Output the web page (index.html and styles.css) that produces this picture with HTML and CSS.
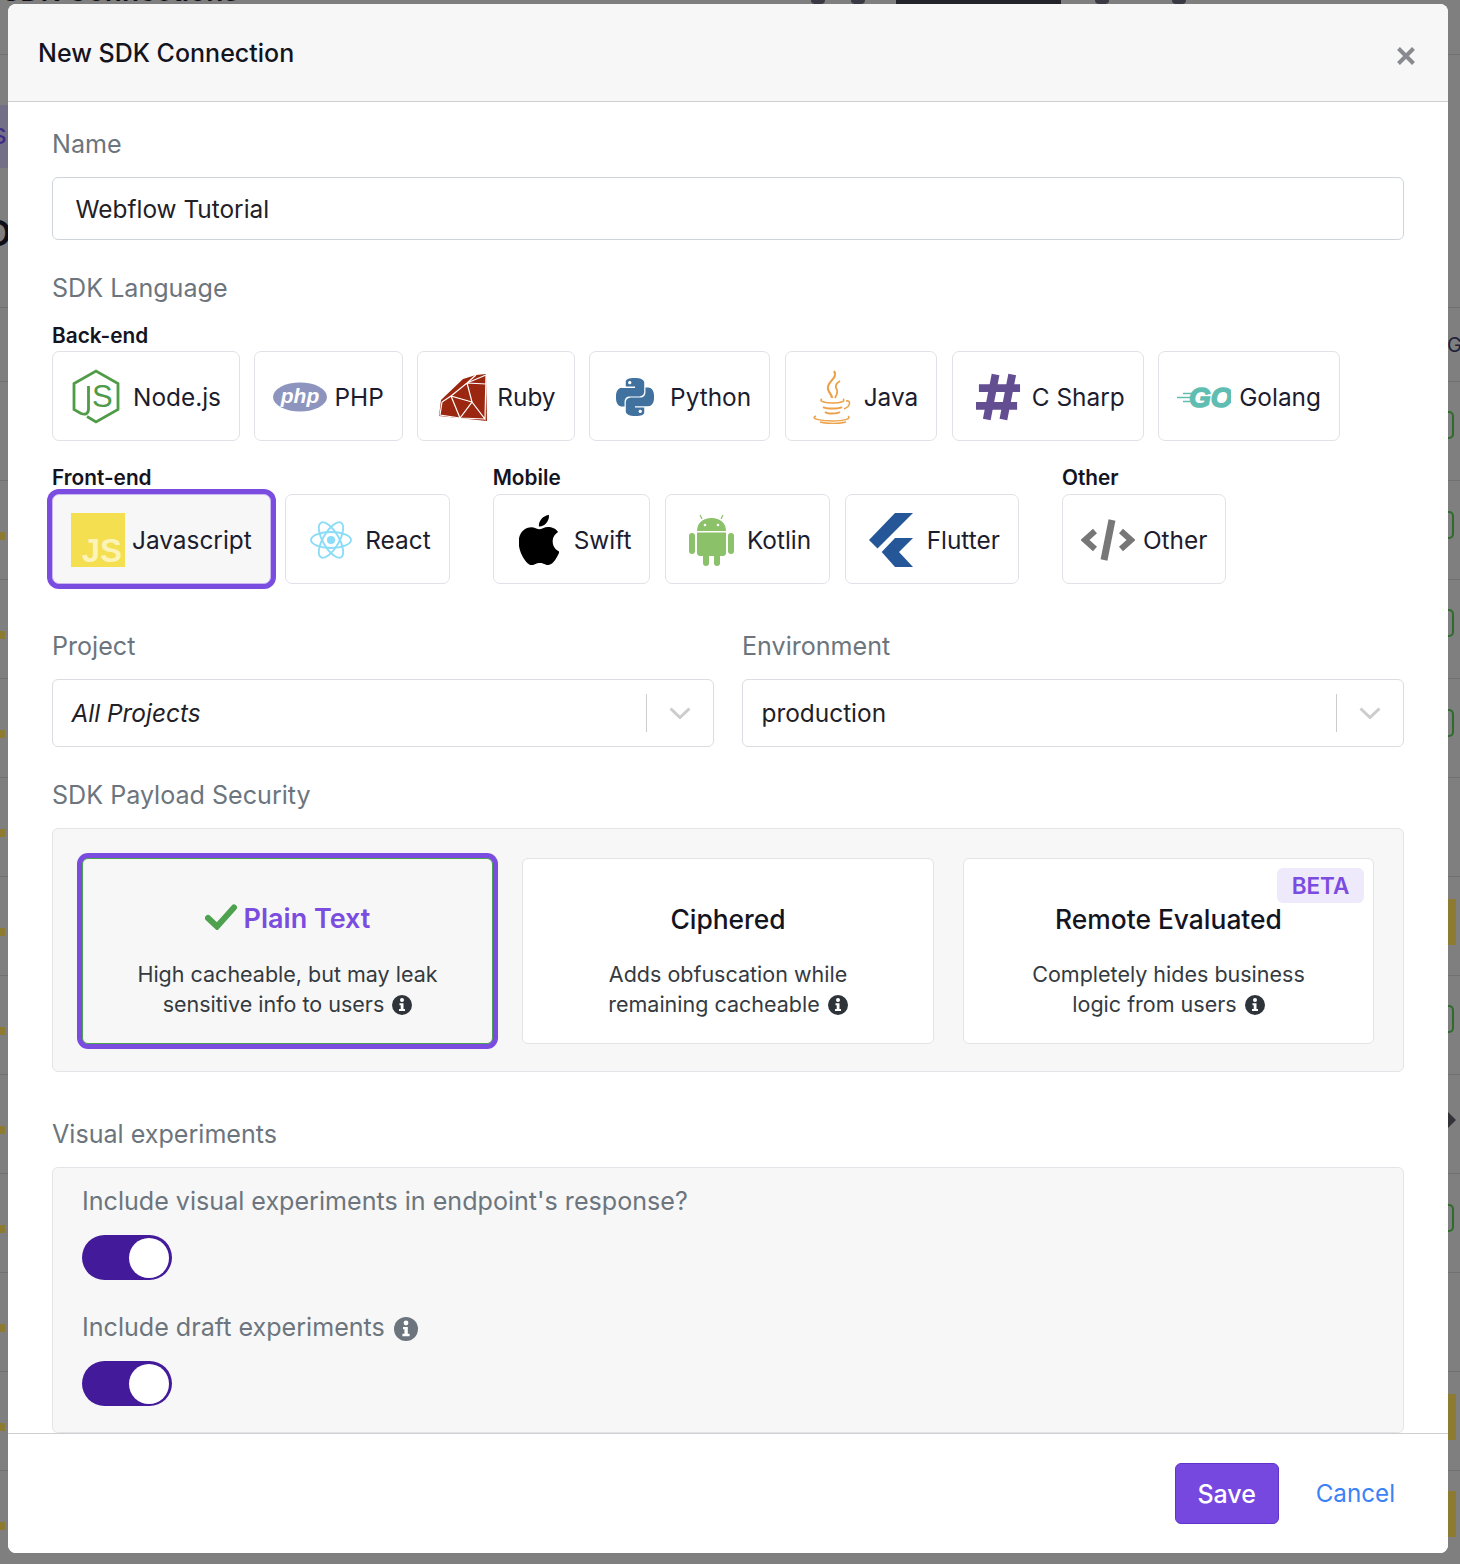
FILE: index.html
```html
<!DOCTYPE html>
<html>
	<head>
		<meta charset="UTF-8">
		<title>New SDK Connection</title>
		<link rel="stylesheet" href="styles.css">
	</head>
	<body>

		<!--page behind the modal-->
		<div class="backdrop">
			<span class="bg-rows"></span>
			<span class="bg-warn"></span>
			<span class="bg-line l1"></span>
			<span class="bg-line l2"></span>
			<span class="bg-title">SDK Connections</span>
			<span class="bg-block"></span>
			<span class="bg-dot d1"></span>
			<span class="bg-dot d2"></span>
			<span class="bg-dot d3"></span>
			<span class="bg-dot d4"></span>
			<span class="bg-account">Demo Account 1</span>
			<span class="bg-side"></span>
			<span class="bg-s">s</span>
			<span class="bg-o">O</span>
			<span class="bg-g">G</span>
			<span class="bg-bracket b1"></span>
			<span class="bg-bracket b2"></span>
			<span class="bg-bracket b3"></span>
			<span class="bg-bracket b4"></span>
			<span class="bg-bracket b5"></span>
			<span class="bg-bracket b6"></span>
			<span class="bg-arrow"></span>
			<span class="bg-yellow y1"></span>
			<span class="bg-yellow y2"></span>
			<span class="bg-yellow y3"></span>
		</div>

		<div class="modal">
			<div class="modal-header">
				<h4 class="modal-title">New SDK Connection</h4>
				<svg class="close-icon" viewBox="0 0 20 20"><path d="M2.500 2.500L17.500 17.500M17.500 2.500L2.500 17.500"/></svg>
			</div>

			<div class="modal-body">
				<label class="field-label">Name</label>
				<div class="text-input">Webflow Tutorial</div>

				<label class="field-label mt-section">SDK Language</label>
				<div class="sub-label first-sub">Back-end</div>
				<div class="lang-row">
					<div class="lang-btn">
						<svg class="ic ic-node" width="48" height="56" viewBox="0 0 48 56">
							<path d="M15 47.500L24 53L46 40.500V14.500L24 2L2 14.500V40.500L9 44.500C13 46 16.500 45 16.500 40V17" fill="none" stroke="#4f9b47" stroke-width="2.800"/>
							<text x="20" y="38" class="node-s">S</text>
						</svg>
						Node.js
					</div>
					<div class="lang-btn">
						<svg class="ic ic-php" width="54" height="30" viewBox="0 0 54 30">
							<ellipse cx="27" cy="15" rx="27" ry="14.500" fill="#8d95bf"/>
							<text x="27" y="21" class="php-text">php</text>
						</svg>
						PHP
					</div>
					<div class="lang-btn">
						<svg class="ic ic-ruby" width="48" height="47" viewBox="0 0 48 47">
							<path d="M47 0L48 47L0 42L2 26L24 5L37 1Z" fill="#9b2710"/>
							<path d="M47 1L28 9L33 28L46 45L47 1ZM28 9L12 22L33 28L21 44L12 22L3 28L1 41L21 44L46 45M28 9L37 1M28 9L47 10M3 28L12 22" fill="none" stroke="#fff" stroke-width="1.200"/>
						</svg>
						Ruby
					</div>
					<div class="lang-btn">
						<svg class="ic ic-python" width="38" height="38" viewBox="0 0 24 24">
							<path fill="#41719f" d="M14.250.180l.900.200.730.260.590.300.450.320.340.340.250.340.160.330.100.300.040.260.020.200-.010.130V8.500l-.050.630-.130.550-.210.460-.260.380-.300.310-.330.250-.350.190-.350.140-.330.100-.300.070-.260.040-.210.020H8.770l-.690.050-.590.140-.500.220-.410.270-.330.320-.270.350-.200.360-.150.370-.100.350-.070.320-.040.270-.020.210v3.060H3.170l-.210-.030-.280-.070-.320-.120-.350-.180-.360-.260-.360-.360-.350-.460-.320-.590-.280-.730-.210-.880-.140-1.050-.050-1.230.060-1.220.160-1.040.240-.870.320-.710.360-.570.400-.440.420-.330.420-.240.400-.160.360-.100.320-.050.240-.010h.160l.060.010h8.160v-.830H6.180l-.010-2.750-.020-.370.050-.340.110-.310.170-.280.250-.260.310-.230.380-.200.440-.180.510-.150.580-.120.640-.100.710-.060.770-.040.840-.020 1.270.050zm-6.300 1.980l-.230.330-.080.410.080.410.230.340.330.220.410.090.410-.09.330-.22.230-.34.080-.41-.08-.41-.23-.33-.33-.22-.41-.09-.41.090zm13.090 3.950l.280.060.320.120.350.180.360.270.360.350.350.470.320.590.280.730.210.880.140 1.040.050 1.230-.060 1.230-.160 1.040-.240.860-.320.710-.360.570-.400.450-.420.330-.420.240-.400.160-.360.090-.320.050-.240.020-.160-.010h-8.220v.820h5.840l.010 2.760.020.360-.050.340-.110.310-.170.290-.250.250-.310.240-.380.200-.440.170-.510.150-.580.130-.640.090-.710.070-.770.040-.840.010-1.270-.04-1.070-.14-.900-.200-.730-.250-.590-.300-.450-.330-.340-.340-.250-.340-.160-.330-.100-.300-.040-.250-.020-.200.010-.130v-5.340l.050-.640.130-.540.210-.460.260-.380.300-.320.330-.240.350-.200.350-.140.330-.100.300-.060.260-.040.210-.020.130-.010h5.840l.690-.050.590-.140.500-.210.410-.280.330-.320.270-.350.200-.360.150-.360.100-.350.070-.320.040-.280.020-.210V6.070h2.090l.140.010zm-6.470 14.250l-.230.330-.080.410.080.410.230.330.330.230.410.08.410-.08.330-.23.230-.33.080-.41-.08-.41-.23-.33-.33-.23-.41-.08-.41.08z"/>
						</svg>
						Python
					</div>
					<div class="lang-btn">
						<svg class="ic ic-java" width="42" height="54" viewBox="0 0 42 54">
							<g fill="none" stroke="#eca24a">
								<path d="M23 1C28 8 15 12 17 19C18 23 21 25 21 28" stroke-width="2.200"/>
								<path d="M29 11C24 14 24 17 26 20C27 23 25 26 24 28" stroke-width="1.800"/>
								<path d="M11 29C7 31 14 33 22 33C30 33 35 31 32 29M35 31C40 30 40 36 33 39" stroke-width="1.600"/>
								<path d="M12 37C14 39 29 39 31 37M14 42C16 44 26 44 29 42" stroke-width="1.800"/>
								<path d="M5 46C-2 49 12 51 22 51C32 51 41 49 37 46M9 52C16 54 28 54 35 52" stroke-width="1.500"/>
							</g>
						</svg>
						Java
					</div>
					<div class="lang-btn">
						<svg class="ic ic-csharp" width="47" height="50" viewBox="0 0 48 50">
							<path d="M21 2L12 48M38 2L29 48M4 16H46M1 34H43" fill="none" stroke="#644e92" stroke-width="8"/>
						</svg>
						C Sharp
					</div>
					<div class="lang-btn">
						<svg class="ic ic-go" width="54" height="24" viewBox="0 0 54 24">
							<path d="M6 8.500H15M0 12.500H14M6 16.500H13" stroke="#5fbdb2" stroke-width="1.500"/>
							<text x="12" y="22" class="go-text">GO</text>
						</svg>
						Golang
					</div>
				</div>

				<div class="lang-groups">
					<div class="lang-group">
						<div class="sub-label">Front-end</div>
						<div class="lang-row">
							<div class="lang-btn selected">
								<div class="ic js-logo">JS</div>
								Javascript
							</div>
							<div class="lang-btn">
								<svg class="ic ic-react" width="42" height="40" viewBox="0 0 42 40">
									<g fill="none" stroke="#8adcf9" stroke-width="1.800">
										<ellipse cx="21" cy="20" rx="20" ry="8"/>
										<ellipse cx="21" cy="20" rx="20" ry="8" transform="rotate(60 21 20)"/>
										<ellipse cx="21" cy="20" rx="20" ry="8" transform="rotate(120 21 20)"/>
									</g>
									<circle cx="21" cy="20" r="4" fill="#8adcf9"/>
								</svg>
								React
							</div>
						</div>
					</div>
					<div class="lang-group">
						<div class="sub-label">Mobile</div>
						<div class="lang-row">
							<div class="lang-btn">
								<svg class="ic ic-swift" width="40" height="50" viewBox="2.500 0 19 24">
									<path fill="#000" d="M12.152 6.896c-.948 0-2.415-1.078-3.960-1.040-2.040.027-3.910 1.183-4.961 3.014-2.117 3.675-.546 9.103 1.519 12.090 1.013 1.454 2.208 3.090 3.792 3.039 1.520-.065 2.090-.987 3.935-.987 1.831 0 2.350.987 3.960.948 1.637-.026 2.676-1.480 3.676-2.948 1.156-1.688 1.636-3.325 1.662-3.415-.039-.013-3.182-1.221-3.220-4.857-.026-3.040 2.480-4.494 2.597-4.559-1.429-2.090-3.623-2.324-4.390-2.376-2-.156-3.675 1.090-4.610 1.090zM15.530 3.830c.843-1.012 1.400-2.427 1.245-3.830-1.207.052-2.662.805-3.532 1.818-.780.896-1.454 2.338-1.273 3.714 1.338.104 2.715-.688 3.559-1.701"/>
								</svg>
								Swift
							</div>
							<div class="lang-btn">
								<svg class="ic ic-android" width="45" height="52" viewBox="0 0 45 52">
									<g fill="#8bc168">
										<path d="M8 17C8 9 14 4 22.500 4C31 4 37 9 37 17Z"/>
										<path d="M8 18.500H37V39C37 41 35.500 42 34 42H11C9.500 42 8 41 8 39Z"/>
										<rect x="0" y="19" width="6" height="21" rx="3"/>
										<rect x="39" y="19" width="6" height="21" rx="3"/>
										<rect x="14" y="40" width="6" height="12" rx="3"/>
										<rect x="25" y="40" width="6" height="12" rx="3"/>
									</g>
									<path d="M13 5L11 1M32 5L34 1" stroke="#8bc168" stroke-width="1.200"/>
									<circle cx="16" cy="11" r="1.300" fill="#fff"/>
									<circle cx="29" cy="11" r="1.300" fill="#fff"/>
								</svg>
								Kotlin
							</div>
							<div class="lang-btn">
								<svg class="ic ic-flutter" width="44" height="54" viewBox="0 0 44 54">
									<path d="M0 27L26 0H44L8.500 35.500Z" fill="#245698"/>
									<path d="M12.700 39L26 25H44L30 39L44 54H26Z" fill="#245698"/>
								</svg>
								Flutter
							</div>
						</div>
					</div>
					<div class="lang-group">
						<div class="sub-label">Other</div>
						<div class="lang-row">
							<div class="lang-btn">
								<svg class="ic ic-other" width="54" height="42" viewBox="0 0 54 42">
									<path d="M14 12L4 21L14 30M40 12L50 21L40 30" fill="none" stroke="#777" stroke-width="6"/>
									<path d="M31 1L23 41" stroke="#777" stroke-width="7"/>
								</svg>
								Other
							</div>
						</div>
					</div>
				</div>

				<div class="select-row">
					<div>
						<label class="field-label">Project</label>
						<div class="select-box">
							<span class="select-value italic">All Projects</span>
							<span class="select-sep"></span>
							<svg class="chevron" viewBox="0 0 22 12"><path d="M1.500 1.500L11 10.500L20.500 1.500"/></svg>
						</div>
					</div>
					<div>
						<label class="field-label">Environment</label>
						<div class="select-box">
							<span class="select-value">production</span>
							<span class="select-sep"></span>
							<svg class="chevron" viewBox="0 0 22 12"><path d="M1.500 1.500L11 10.500L20.500 1.500"/></svg>
						</div>
					</div>
				</div>

				<label class="field-label mt-section">SDK Payload Security</label>
				<div class="security-box">
					<div class="sec-card selected">
						<div class="sec-title purple">
							<svg class="check" viewBox="0 0 32 26"><path d="M3 14L12 22.500L29 3.500" /></svg>
							Plain Text
						</div>
						<div class="sec-desc">High cacheable, but may leak<br>sensitive info to users
							<svg class="info" viewBox="0 0 20 20"><circle cx="10" cy="10" r="10"/><circle class="info-dot" cx="10" cy="5" r="2"/><path class="info-dot" d="M7.500 8.300H11.500V14H13V16H7V14H8.700V10.300H7.500Z"/></svg>
						</div>
					</div>
					<div class="sec-card">
						<div class="sec-title">Ciphered</div>
						<div class="sec-desc">Adds obfuscation while<br>remaining cacheable
							<svg class="info" viewBox="0 0 20 20"><circle cx="10" cy="10" r="10"/><circle class="info-dot" cx="10" cy="5" r="2"/><path class="info-dot" d="M7.500 8.300H11.500V14H13V16H7V14H8.700V10.300H7.500Z"/></svg>
						</div>
					</div>
					<div class="sec-card">
						<span class="beta">BETA</span>
						<div class="sec-title">Remote Evaluated</div>
						<div class="sec-desc">Completely hides business<br>logic from users
							<svg class="info" viewBox="0 0 20 20"><circle cx="10" cy="10" r="10"/><circle class="info-dot" cx="10" cy="5" r="2"/><path class="info-dot" d="M7.500 8.300H11.500V14H13V16H7V14H8.700V10.300H7.500Z"/></svg>
						</div>
					</div>
				</div>

				<label class="field-label mt-large">Visual experiments</label>
				<div class="visual-box">
					<label class="field-label">Include visual experiments in endpoint's response?</label>
					<div class="toggle"><span class="knob"></span></div>
					<label class="field-label mt-toggle">Include draft experiments
						<svg class="info info-lg" viewBox="0 0 20 20"><circle cx="10" cy="10" r="10"/><circle class="info-dot" cx="10" cy="5" r="2"/><path class="info-dot" d="M7.500 8.300H11.500V14H13V16H7V14H8.700V10.300H7.500Z"/></svg>
					</label>
					<div class="toggle"><span class="knob"></span></div>
				</div>
			</div>

			<div class="modal-footer">
				<button class="btn-save">Save</button>
				<a class="btn-cancel" href="javascript:;">Cancel</a>
			</div>
		</div>

	</body>
</html>
```

FILE: styles.css
```css
/*reset*/
*{
	margin: 0;
	padding: 0;
	box-sizing: border-box;
}

html, body{
	height: 1564px;
	overflow: hidden;
}

body{
	background-color: #7f7f7f;
	font-family: Inter, "Liberation Sans", sans-serif;
	color: #1c1c2e;
	padding: 4px 12px 11px 8px;
	position: relative;
}

/*page behind the modal*/
.backdrop{
	position: absolute;
	left: 0;
	top: 0;
	width: 1460px;
	height: 1564px;
	overflow: hidden;
}

.backdrop span{
	position: absolute;
}

.bg-rows{
	left: 0;
	top: 381px;
	width: 1460px;
	height: 1183px;
	background-image: repeating-linear-gradient(to bottom, #707070 0, #707070 1px, transparent 1px, transparent 99px);
}

.bg-warn{
	left: 0;
	top: 532px;
	width: 5px;
	height: 1032px;
	background-image: repeating-linear-gradient(to bottom, #8c7b31 0, #8c7b31 8px, transparent 8px, transparent 99px);
}

.bg-line{
	left: 0;
	width: 1460px;
	height: 1px;
	background-color: #707070;
}

.l1{ top: 54px; }
.l2{ top: 307px; }

.bg-title{
	left: 2px;
	top: -26px;
	font-size: 28px;
	line-height: 34px;
	font-weight: 600;
	color: #0e0e17;
	white-space: nowrap;
}

.bg-block{
	left: 896px;
	top: 0;
	width: 165px;
	height: 4px;
	background-color: #23232c;
}

.bg-dot{
	top: -4px;
	width: 14px;
	height: 8px;
	border-radius: 4px;
	background-color: #3a3a44;
}

.d1{ left: 811px; }
.d2{ left: 851px; }
.d3{ left: 1095px; }
.d4{ left: 1172px; }

.bg-account{
	left: 1203px;
	top: -24px;
	font-size: 25px;
	line-height: 30px;
	color: #0e0e17;
	white-space: nowrap;
}

.bg-side{
	left: 0;
	top: 105px;
	width: 8px;
	height: 63px;
	background-color: #736f86;
}

.bg-s{
	left: -8px;
	top: 117px;
	font-size: 28px;
	color: #3f2a86;
}

.bg-o{
	left: -16px;
	top: 211px;
	font-size: 36px;
	font-weight: 600;
	color: #0e0e17;
}

.bg-g{
	left: 1447px;
	top: 333px;
	font-size: 20px;
	color: #23233a;
}

.bg-bracket{
	left: 1448px;
	width: 6px;
	height: 28px;
	border: 2px solid #2f6b2a;
	border-left: 0;
	border-radius: 0 5px 5px 0;
}

.b1{ top: 411px; }
.b2{ top: 511px; }
.b3{ top: 609px; }
.b4{ top: 709px; }
.b5{ top: 1005px; }
.b6{ top: 1204px; }

.bg-arrow{
	left: 1448px;
	top: 1112px;
	border-left: 8px solid #33333a;
	border-top: 8px solid transparent;
	border-bottom: 8px solid transparent;
}

.bg-yellow{
	left: 1448px;
	width: 8px;
	height: 46px;
	background-color: #8c7b31;
}

.y1{ top: 899px; }
.y2{ top: 1394px; }
.y3{ top: 1491px; }

/*modal*/
.modal{
	position: relative;
	width: 1440px;
	height: 1549px;
	background-color: #fff;
	border-radius: 8px;
	overflow: hidden;
	display: flex;
	flex-direction: column;
}

.modal-header{
	height: 98px;
	flex: none;
	background-color: #f7f7f7;
	border-bottom: 1px solid #cfcfcf;
	padding: 0 32px 0 30px;
	display: flex;
	justify-content: space-between;
	align-items: center;
}

.modal-title{
	font-size: 25px;
	font-weight: 500;
	color: #14141f;
}

.close-icon{
	width: 20px;
	height: 20px;
	margin-top: 6px;
}

.close-icon path{
	stroke: #888a8f;
	stroke-width: 4;
}

.modal-body{
	flex: 1;
	padding: 23px 44px 0 44px;
	overflow: hidden;
}

.field-label{
	display: block;
	font-size: 25.100px;
	line-height: 38px;
	color: #6c757d;
	margin-bottom: 14px;
}

.mt-section{
	margin-top: 29px;
}

.mt-large{
	margin-top: 43px;
}

.text-input{
	height: 63px;
	line-height: 63px;
	border: 1px solid #ced4da;
	border-radius: 6px;
	padding-left: 22.500px;
	font-size: 24.400px;
	color: #1f2126;
}

/*sdk language buttons*/
.sub-label{
	font-size: 20.800px;
	font-weight: 600;
	line-height: 26px;
	color: #14141f;
	margin-bottom: 3px;
}

.first-sub{
	padding-top: 2px;
	margin-bottom: 2px;
}

.lang-row{
	display: flex;
	gap: 14.500px;
}

.lang-groups{
	display: flex;
	gap: 43px;
	margin-top: 24px;
}

.lang-btn{
	height: 90px;
	display: flex;
	align-items: center;
	gap: 8px;
	padding: 2px 18px 0 19px;
	border: 1px solid #e1e2e8;
	border-radius: 7px;
	font-size: 24.400px;
	color: #1c1c2e;
	white-space: nowrap;
}

.lang-btn.selected{
	background-color: #f7f7f7;
	box-shadow: 0 0 0 5px #7a4ce0;
	border-color: #c9b8f2;
}

.ic{
	flex: none;
}

/*the logos sit in boxes of different widths*/
.ic-node{ margin-right: 5px; }
.ic-php{ margin: 0 -1px; }
.ic-ruby{ margin: 0 2px; }
.ic-python{ margin: 0 8px 0 7px; }
.ic-java{ margin: 0 3px 0 6px; }
.ic-csharp{ margin: 0 2px 0 3px; }
.ic-go{ margin-left: -1px; }
.js-logo{ margin: 0 -1px; }
.ic-react{ margin: 0 5px; }
.ic-swift{ margin: 0 7px 0 6px; }
.ic-android{ margin: 0 5px 0 4px; }
.ic-flutter{ margin: 0 6px 0 4px; }
.ic-other{ margin: 0 0 0 -1px; }

.js-logo{
	width: 54px;
	height: 54px;
	background-color: #f3df4f;
	color: #fbf3b8;
	font-family: "Liberation Sans", sans-serif;
	font-weight: 700;
	font-size: 33px;
	line-height: 76px;
	text-align: right;
	padding-right: 3px;
	overflow: hidden;
}

.node-s{
	font-family: "Liberation Sans", sans-serif;
	font-size: 31px;
	fill: #4f9b47;
}

.php-text{
	font-family: "Liberation Sans", sans-serif;
	font-size: 21px;
	font-weight: 700;
	font-style: italic;
	fill: #fff;
	text-anchor: middle;
}

.go-text{
	font-family: "Liberation Sans", sans-serif;
	font-size: 28px;
	font-weight: 700;
	font-style: italic;
	fill: #5fbdb2;
	stroke: #5fbdb2;
	stroke-width: 1.500;
}

/*project + environment*/
.select-row{
	display: grid;
	grid-template-columns: 662px 662px;
	gap: 28px;
	margin-top: 43px;
}

.select-box{
	height: 68px;
	border: 1px solid #dcdde2;
	border-radius: 6px;
	display: flex;
	align-items: center;
	padding: 0 22px 0 18.500px;
}

.select-value{
	flex: 1;
	font-size: 24.400px;
	color: #1f2126;
}

.italic{
	font-style: italic;
}

.select-sep{
	width: 1px;
	height: 38px;
	background-color: #cccccc;
	margin-right: 22px;
}

.chevron{
	width: 22px;
	height: 12px;
}

.chevron path{
	fill: none;
	stroke: #cccccc;
	stroke-width: 3;
}

/*payload security*/
.security-box{
	height: 244px;
	background-color: #f7f7f7;
	border: 1px solid #e3e4e8;
	border-radius: 6px;
	padding: 29px 29px 27px 29px;
	display: grid;
	grid-template-columns: 411px 412px 411px;
	gap: 29px;
}

.sec-card{
	position: relative;
	background-color: #fff;
	border: 1px solid #e3e4e8;
	border-radius: 6px;
	text-align: center;
	padding-top: 40px;
}

.sec-card.selected{
	background-color: #f7f7f7;
	border-color: #4ea24f;
	box-shadow: 0 0 0 5px #7a4ce0;
}

.sec-title{
	font-size: 26.400px;
	font-weight: 500;
	line-height: 40px;
	color: #14141f;
	margin-bottom: 21px;
}

.sec-title.purple{
	color: #7a4ce0;
	font-size: 27px;
	font-weight: 600;
	display: flex;
	justify-content: center;
	align-items: center;
	gap: 7px;
}

.check{
	width: 32px;
	height: 26px;
	margin-top: -4px;
}

.check path{
	fill: none;
	stroke: #4ea24f;
	stroke-width: 6;
	stroke-linecap: round;
}

.sec-desc{
	font-size: 21.500px;
	line-height: 29.500px;
	color: #343a40;
}

.info{
	width: 20px;
	height: 20px;
	vertical-align: -3px;
	margin-left: 2px;
	fill: #2f343a;
}

.info-dot{
	fill: #fff;
}

.info-lg{
	width: 24px;
	height: 24px;
	vertical-align: -5px;
	fill: #6c757d;
}

.beta{
	position: absolute;
	right: 9px;
	top: 9px;
	width: 87px;
	height: 35px;
	line-height: 36px;
	background-color: #eee9fb;
	color: #7a4ce0;
	font-size: 22.500px;
	font-weight: 600;
	border-radius: 6px;
}

/*visual experiments*/
.visual-box{
	height: 266px;
	background-color: #f7f7f7;
	border: 1px solid #e3e4e8;
	border-radius: 6px;
	padding: 14px 29px 0 29px;
}

.visual-box .field-label{
	margin-bottom: 15px;
}

.visual-box .mt-toggle{
	margin-top: 28px;
}

.toggle{
	width: 90px;
	height: 45px;
	background-color: #431b9a;
	border-radius: 23px;
	display: flex;
	justify-content: flex-end;
	align-items: center;
	padding-right: 3px;
}

.knob{
	width: 40px;
	height: 40px;
	background-color: #fff;
	border-radius: 50%;
}

/*footer*/
.modal-footer{
	height: 120px;
	flex: none;
	background-color: #fff;
	border-top: 1px solid #cfcfcf;
	display: flex;
	justify-content: flex-end;
	align-items: center;
	gap: 37px;
	padding-right: 53px;
}

.btn-save{
	width: 104px;
	height: 61px;
	background-color: #7648e0;
	border: 1px solid #5f34cc;
	border-radius: 6px;
	color: #fff;
	font-family: Inter, "Liberation Sans", sans-serif;
	font-size: 25px;
	font-weight: 500;
}

.btn-cancel{
	color: #3b82f6;
	font-size: 24.200px;
	text-decoration: none;
}
```
